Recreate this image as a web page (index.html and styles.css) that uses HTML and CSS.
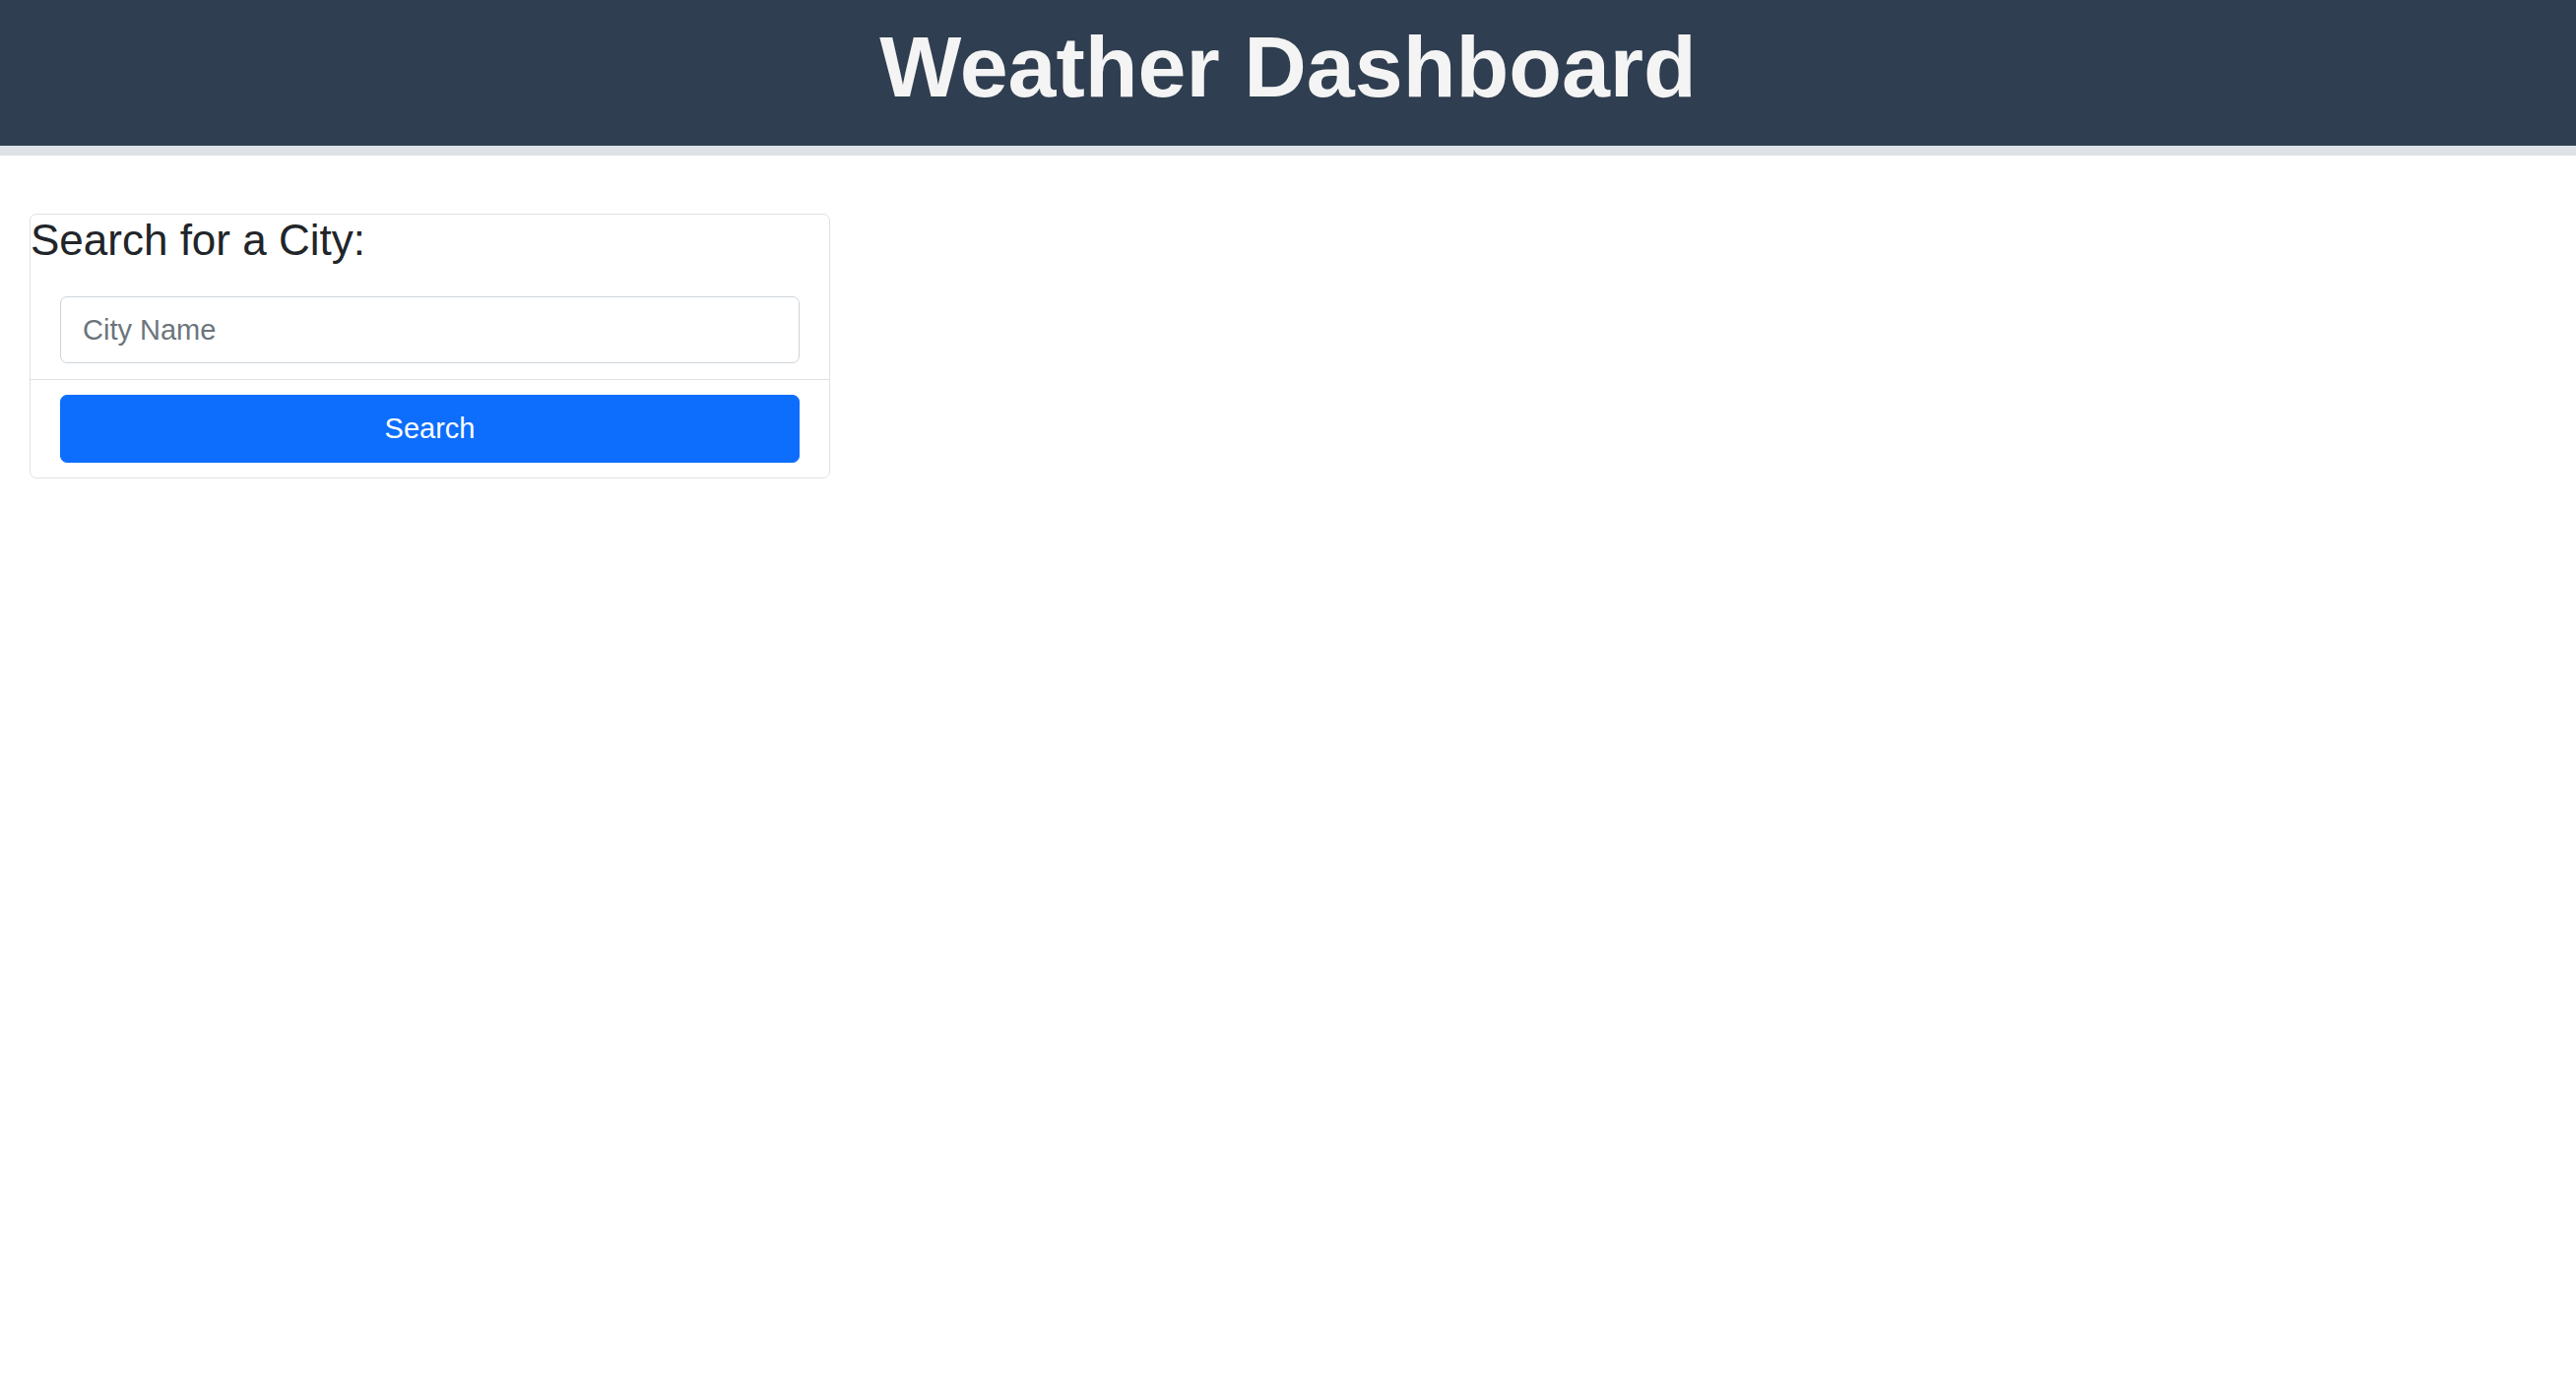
FILE: index.html
```html
<!DOCTYPE html>
<html lang="en">
<head>
<meta charset="utf-8">
<title>Weather Dashboard</title>
<link rel="stylesheet" href="styles.css">
</head>
<body>
<header class="site-header">
  <h1 class="site-title">Weather Dashboard</h1>
</header>
<main class="page">
  <section class="search-card">
    <h4 class="search-title">Search for a City:</h4>
    <div class="search-input-row">
      <input class="city-input" type="text" placeholder="City Name">
    </div>
    <div class="search-button-row">
      <button class="search-button" type="button">Search</button>
    </div>
  </section>
</main>
</body>
</html>
```
FILE: styles.css
```css
* { box-sizing: border-box; }

html, body {
  margin: 0;
  padding: 0;
  background: #ffffff;
  font-family: "Liberation Sans", Arial, Helvetica, sans-serif;
  color: #212529;
}

.site-header {
  background: #2f3e50;
  border-bottom: 10px solid #dee2e6;
  padding: 15px 0 27px;
  text-align: center;
}

.site-title {
  margin: 0;
  font-size: 88px;
  line-height: 106px;
  font-weight: 700;
  color: #f4f4f4;
}

.page {
  padding: 59px 30px 0;
}

.search-card {
  width: 813px;
  border: 1px solid #dfe2e5;
  border-radius: 7px;
  background: #fff;
}

.search-title {
  margin: 0 0 31px;
  font-size: 44px;
  line-height: 52px;
  font-weight: 400;
  color: #212529;
}

.search-input-row {
  padding: 0 30px 16px;
  border-bottom: 1px solid #dfe2e5;
}

.city-input {
  display: block;
  width: 100%;
  height: 68px;
  padding: 0 22px;
  border: 1px solid #ced4da;
  border-radius: 7px;
  font-family: "Liberation Sans", Arial, sans-serif;
  font-size: 29px;
  color: #212529;
  background: #fff;
  outline: none;
}

.city-input::placeholder {
  color: #6c757d;
}

.search-button-row {
  padding: 15px 30px 15px;
}

.search-button {
  display: block;
  width: 100%;
  height: 69px;
  border: 1px solid #0d6efd;
  border-radius: 7px;
  background: #0d6efd;
  color: #ffffff;
  font-family: "Liberation Sans", Arial, sans-serif;
  font-size: 29px;
  line-height: 1.5;
  cursor: pointer;
}
```
